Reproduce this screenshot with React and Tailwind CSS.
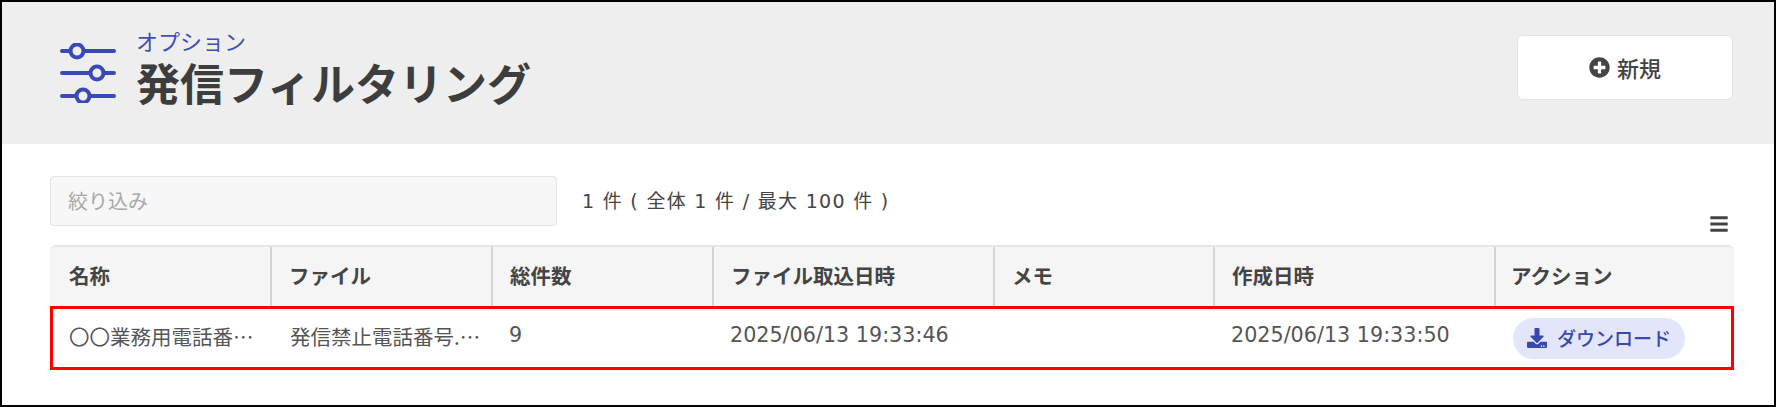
import { FaPlusCircle, FaDownload, FaBars } from 'react-icons/fa'

const font = { fontFamily: '"Noto Sans CJK JP", "Noto Sans", sans-serif' }
const latin = { fontFamily: '"DejaVu Sans", "Noto Sans CJK JP", sans-serif' }

const columns = [
  { label: '名称', w: 'w-[220px]', pad: 'pl-[19px]' },
  { label: 'ファイル', w: 'w-[221px]', pad: 'pl-[17px]' },
  { label: '総件数', w: 'w-[221px]', pad: 'pl-[17px]' },
  { label: 'ファイル取込日時', w: 'w-[281px]', pad: 'pl-[17px]' },
  { label: 'メモ', w: 'w-[220px]', pad: 'pl-[17px]' },
  { label: '作成日時', w: 'w-[281px]', pad: 'pl-[17px]' },
  { label: 'アクション', w: 'flex-1', pad: 'pl-[15px]' },
]

function SliderIcon() {
  return (
    <svg width="56" height="60" viewBox="0 0 56 60" className="shrink-0" fill="none" stroke="#3949b5" strokeWidth="4" strokeLinecap="round">
      <path d="M2 8h8M24 8h30M2 30h28M44 30h10M2 53h14M30 53h24" />
      <circle cx="17" cy="8" r="6.5" />
      <circle cx="37" cy="30" r="6.5" />
      <circle cx="23" cy="53" r="6.5" />
    </svg>
  )
}

export default function App() {
  return (
    <div lang="ja" style={font} className="w-[1776px] h-[407px] border-2 border-black bg-white text-[#444] overflow-hidden">
      <header className="h-[142px] bg-[#eeeeee] flex items-start justify-between pl-[58px] pr-[41px]">
        <div className="flex items-center gap-[20px] pt-[25px]">
          <div className="pt-[11px]">
            <SliderIcon />
          </div>
          <div>
            <p className="text-[22px] leading-[26px] text-[#3f4fb8]">オプション</p>
            <h1 className="text-[44px] leading-[52px] font-bold text-[#3d3d3d] mt-[3px]">発信フィルタリング</h1>
          </div>
        </div>
        <button className="mt-[33px] w-[216px] h-[65px] bg-white border border-[#e4e4e4] rounded-[6px] flex items-center justify-center gap-[7px] text-[22px] font-medium text-[#444]">
          <FaPlusCircle size={21} />
          <span>新規</span>
        </button>
      </header>

      <main className="pl-[48px] pr-[40px]">
        <div className="flex items-center h-[50px] mt-[32px]">
          <div className="w-[507px] h-[50px] bg-[#f7f7f7] border border-[#e3e3e3] rounded-[4px] flex items-center pl-[17px] text-[20px] text-[#a9a9a9]">
            絞り込み
          </div>
          <p style={latin} className="ml-[25px] text-[19px] tracking-[1.3px] text-[#444]">1 件 ( 全体 1 件 / 最大 100 件 )</p>
        </div>

        <div className="flex justify-end pr-[5px] mt-[-9px] h-[17px] items-end">
          <FaBars size={20} className="text-[#444]" />
        </div>

        <div className="mt-[11px]">
          <div className="flex h-[61px] bg-[#f5f5f5] border-t-2 border-[#e6e6e6] rounded-t-[6px]">
            {columns.map((col, i) => (
              <div
                key={col.label}
                className={`${col.w} ${col.pad} flex items-center pb-[3px] text-[20.5px] font-bold text-[#444] ${i > 0 ? 'border-l-2 border-[#d4d4d4]' : ''}`}
              >
                {col.label}
              </div>
            ))}
          </div>
          <div className="flex h-[64px] border-[3px] border-[#ff0000] items-center text-[20.5px] text-[#555]">
            <div className="w-[217px] pl-[16px] pr-[12px] mb-[4px] truncate">〇〇業務用電話番号リスト</div>
            <div className="w-[221px] pl-[20px] pr-[9px] mb-[4px] truncate">発信禁止電話番号.csv</div>
            <div style={latin} className="w-[221px] pl-[18px] mb-[4px] text-[20.7px]">9</div>
            <div style={latin} className="w-[281px] pl-[18px] mb-[4px] text-[20.7px]">2025/06/13 19:33:46</div>
            <div className="w-[220px]" />
            <div style={latin} className="w-[281px] pl-[18px] mb-[4px] text-[20.7px]">2025/06/13 19:33:50</div>
            <div className="flex-1 pl-[19px]">
              <button className="w-[172px] h-[41px] rounded-full bg-[#e3e5fb] flex items-center justify-center gap-[10px] text-[19px] font-medium text-[#3949ab]">
                <FaDownload size={20} />
                <span>ダウンロード</span>
              </button>
            </div>
          </div>
        </div>
      </main>
    </div>
  )
}
